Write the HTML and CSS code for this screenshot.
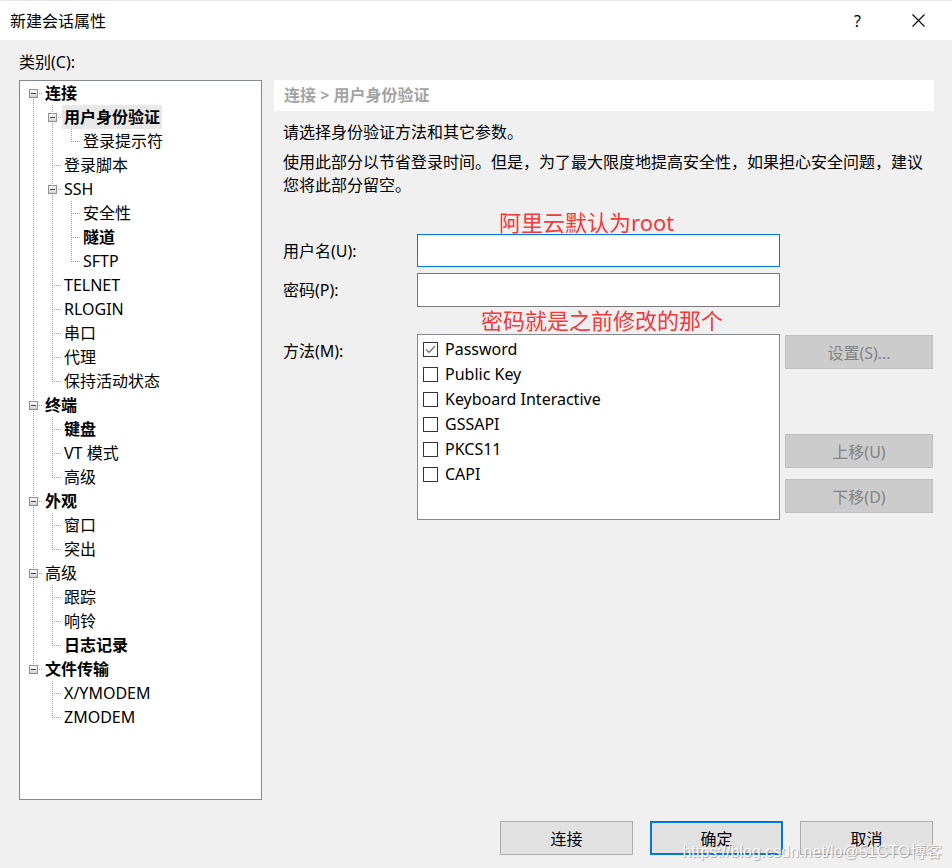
FILE: index.html
```html
<!DOCTYPE html>
<html lang="zh-CN">
<head>
<meta charset="utf-8">
<title>新建会话属性</title>
<link rel="stylesheet" href="styles.css">
</head>
<body>
<div class="window">
  <div class="titlebar">
    <span class="title">新建会话属性</span>
    <div class="tb-controls">
      <span class="help">?</span>
      <svg class="close" width="13" height="13" viewBox="0 0 13 13"><path d="M0.5 0.5L12.5 12.5M12.5 0.5L0.5 12.5" stroke="#000" stroke-width="1.1" fill="none"/></svg>
    </div>
  </div>

  <div class="cat-label">类别(C):</div>

  <div class="main">
    <div class="tree">
      <div class="row"><span class="c f"><i class="box"></i></span><span class="txt b">连接</span></div>
      <div class="row"><span class="c v"></span><span class="c t"><i class="box"></i></span><span class="txt b sel">用户身份验证</span></div>
      <div class="row"><span class="c v"></span><span class="c v"></span><span class="c l"></span><span class="txt">登录提示符</span></div>
      <div class="row"><span class="c v"></span><span class="c t"></span><span class="txt">登录脚本</span></div>
      <div class="row"><span class="c v"></span><span class="c t"><i class="box"></i></span><span class="txt">SSH</span></div>
      <div class="row"><span class="c v"></span><span class="c v"></span><span class="c t"></span><span class="txt">安全性</span></div>
      <div class="row"><span class="c v"></span><span class="c v"></span><span class="c t"></span><span class="txt b">隧道</span></div>
      <div class="row"><span class="c v"></span><span class="c v"></span><span class="c l"></span><span class="txt">SFTP</span></div>
      <div class="row"><span class="c v"></span><span class="c t"></span><span class="txt">TELNET</span></div>
      <div class="row"><span class="c v"></span><span class="c t"></span><span class="txt">RLOGIN</span></div>
      <div class="row"><span class="c v"></span><span class="c t"></span><span class="txt">串口</span></div>
      <div class="row"><span class="c v"></span><span class="c t"></span><span class="txt">代理</span></div>
      <div class="row"><span class="c v"></span><span class="c l"></span><span class="txt">保持活动状态</span></div>
      <div class="row"><span class="c t"><i class="box"></i></span><span class="txt b">终端</span></div>
      <div class="row"><span class="c v"></span><span class="c t"></span><span class="txt b">键盘</span></div>
      <div class="row"><span class="c v"></span><span class="c t"></span><span class="txt">VT 模式</span></div>
      <div class="row"><span class="c v"></span><span class="c l"></span><span class="txt">高级</span></div>
      <div class="row"><span class="c t"><i class="box"></i></span><span class="txt b">外观</span></div>
      <div class="row"><span class="c v"></span><span class="c t"></span><span class="txt">窗口</span></div>
      <div class="row"><span class="c v"></span><span class="c l"></span><span class="txt">突出</span></div>
      <div class="row"><span class="c t"><i class="box"></i></span><span class="txt">高级</span></div>
      <div class="row"><span class="c v"></span><span class="c t"></span><span class="txt">跟踪</span></div>
      <div class="row"><span class="c v"></span><span class="c t"></span><span class="txt">响铃</span></div>
      <div class="row"><span class="c v"></span><span class="c l"></span><span class="txt b">日志记录</span></div>
      <div class="row"><span class="c l"><i class="box"></i></span><span class="txt b">文件传输</span></div>
      <div class="row"><span class="c"></span><span class="c t"></span><span class="txt">X/YMODEM</span></div>
      <div class="row"><span class="c"></span><span class="c l"></span><span class="txt">ZMODEM</span></div>
    </div>

    <div class="panel">
      <div class="crumb">连接 &gt; 用户身份验证</div>
      <p class="p1">请选择身份验证方法和其它参数。</p>
      <p class="p2">使用此部分以节省登录时间。但是，为了最大限度地提高安全性，如果担心安全问题，建议<br>您将此部分留空。</p>

      <div class="note note1">阿里云默认为root</div>
      <div class="field f-user">
        <label class="lbl">用户名(U):</label>
        <div class="input focus"></div>
      </div>
      <div class="field f-pass">
        <label class="lbl">密码(P):</label>
        <div class="input"></div>
      </div>
      <div class="note note2">密码就是之前修改的那个</div>

      <div class="method">
        <label class="lbl mlbl">方法(M):</label>
        <div class="list">
          <div class="item"><span class="cb"><svg width="13" height="13" viewBox="0 0 13 13"><path d="M2 6.5L5 9.5L11 3" stroke="#6b6b6b" stroke-width="1.2" fill="none"/></svg></span>Password</div>
          <div class="item"><span class="cb"></span>Public Key</div>
          <div class="item"><span class="cb"></span>Keyboard Interactive</div>
          <div class="item"><span class="cb"></span>GSSAPI</div>
          <div class="item"><span class="cb"></span>PKCS11</div>
          <div class="item"><span class="cb"></span>CAPI</div>
        </div>
        <div class="side-btns">
          <div class="dbtn">设置(S)...</div>
          <div class="dbtn up">上移(U)</div>
          <div class="dbtn">下移(D)</div>
        </div>
      </div>
    </div>
  </div>

  <div class="footer">
    <div class="btn">连接</div>
    <div class="btn default">确定</div>
    <div class="btn">取消</div>
    <span class="watermark">https://blog.csdn.net/lo@51CTO博客</span>
  </div>
</div>
</body>
</html>
```

FILE: styles.css
```css
* { box-sizing: border-box; }
html, body { margin: 0; padding: 0; }
body {
  background: #f0f0f0;
  font-family: "Noto Sans", "Noto Sans CJK SC", sans-serif;
  font-size: 16px;
  color: #000;
}
.window {
  width: 952px;
  height: 868px;
  background: #f0f0f0;
  position: relative;
  overflow: hidden;
}
.titlebar {
  height: 40px;
  background: #fff;
  border-top: 1px solid #e6e6e6;
  display: flex;
  align-items: center;
  justify-content: space-between;
  padding-left: 10px;
}
.title { font-size: 16px; line-height: 20px; }
.tb-controls { display: flex; align-items: center; }
.help { font-size: 16px; line-height: 20px; margin-right: 51px; }
.close { margin-right: 27px; display: block; }

.cat-label {
  padding: 12px 0 0 19px;
  height: 40px;
  line-height: 20px;
  font-size: 16px;
}

.main {
  display: flex;
  padding-left: 19px;
  gap: 12px;
}

/* tree */
.tree {
  width: 243px;
  height: 720px;
  background: #fff;
  border: 1px solid #828790;
  padding-left: 4px;
  flex: none;
}
.row {
  display: flex;
  align-items: center;
  height: 24px;
}
.c {
  width: 19px;
  height: 24px;
  flex: none;
  display: flex;
  align-items: center;
  justify-content: center;
  padding-right: 1px;
  background-repeat: no-repeat;
}
.c.v {
  background-image: repeating-linear-gradient(to bottom, #a0a0a0 0 1px, transparent 1px 2px);
  background-size: 1px 24px;
  background-position: 9px 0;
}
.c.t {
  background-image: repeating-linear-gradient(to bottom, #a0a0a0 0 1px, transparent 1px 2px),
                    repeating-linear-gradient(to right, #a0a0a0 0 1px, transparent 1px 2px);
  background-size: 1px 24px, 10px 1px;
  background-position: 9px 0, 9px 12px;
}
.c.l {
  background-image: repeating-linear-gradient(to bottom, #a0a0a0 0 1px, transparent 1px 2px),
                    repeating-linear-gradient(to right, #a0a0a0 0 1px, transparent 1px 2px);
  background-size: 1px 12px, 10px 1px;
  background-position: 9px 0, 9px 12px;
}
.c.f {
  background-image: repeating-linear-gradient(to bottom, #a0a0a0 0 1px, transparent 1px 2px),
                    repeating-linear-gradient(to right, #a0a0a0 0 1px, transparent 1px 2px);
  background-size: 1px 12px, 10px 1px;
  background-position: 9px 12px, 9px 12px;
}
.box {
  width: 9px;
  height: 9px;
  border: 1px solid #8e8f8f;
  background: linear-gradient(#ffffff, #d2d2d2);
  display: flex;
  align-items: center;
  justify-content: center;
}
.box::after {
  content: "";
  width: 5px;
  height: 1px;
  background: #2c3f7a;
}
.txt {
  padding: 0 2px;
  line-height: 24px;
  font-size: 16px;
  white-space: nowrap;
}
.txt.b { font-weight: 700; }
.txt.sel { background: #e8e8e8; }

/* panel */
.panel {
  width: 660px;
  flex: none;
}
.crumb {
  height: 31px;
  background: #fff;
  color: #a3a3a3;
  font-weight: 700;
  padding-left: 10px;
  line-height: 31px;
}
.p1 {
  margin: 11px 0 0 9px;
  line-height: 20px;
}
.p2 {
  margin: 9px 0 0 9px;
  line-height: 23px;
}
.note {
  color: #f2393c;
  font-size: 22px;
  line-height: 16px;
  height: 20px;
  white-space: nowrap;
  position: relative;
  z-index: 1;
}
.note1 { margin-top: 17px; padding-left: 225px; }
.note2 { margin-top: 5px; padding-left: 207px; }
.field {
  display: flex;
  align-items: center;
}
.lbl {
  width: 143px;
  padding-left: 9px;
  line-height: 20px;
  flex: none;
}
.input {
  width: 363px;
  background: #fff;
  border: 1px solid #7a7a7a;
}
.f-user .input { height: 33px; }
.f-pass { margin-top: 6px; }
.f-pass .input { height: 34px; }
.input.focus { border-color: #0078d7; }

.method {
  display: flex;
  align-items: flex-start;
  margin-top: 2px;
}
.mlbl { padding-top: 7px; }
.list {
  width: 363px;
  height: 186px;
  background: #fff;
  border: 1px solid #828790;
  padding: 2px 0 0 5px;
}
.item {
  display: flex;
  align-items: center;
  height: 25px;
  line-height: 25px;
  white-space: nowrap;
}
.cb {
  width: 15px;
  height: 15px;
  border: 1px solid #333;
  background: #fff;
  margin-right: 7px;
  display: flex;
  align-items: center;
  justify-content: center;
  flex: none;
}
.cb svg { display: block; }
.side-btns {
  margin-left: 5px;
  margin-top: 1px;
  display: flex;
  flex-direction: column;
}
.dbtn {
  width: 148px;
  height: 34px;
  background: #cccccc;
  border: 1px solid #bfbfbf;
  color: #838383;
  display: flex;
  align-items: center;
  justify-content: center;
}
.dbtn.up { margin-top: 65px; margin-bottom: 11px; }

.footer {
  display: flex;
  justify-content: flex-end;
  gap: 17px;
  padding-right: 19px;
  margin-top: 21px;
  position: relative;
}
.btn {
  width: 133px;
  height: 34px;
  background: #e1e1e1;
  border: 1px solid #adadad;
  display: flex;
  align-items: center;
  justify-content: center;
}
.btn.default { border: 2px solid #0078d7; }
.watermark {
  position: absolute;
  right: 10px;
  top: 17px;
  font-family: "Liberation Sans", sans-serif;
  font-size: 16px;
  color: rgba(255, 255, 255, 0.92);
  text-shadow: 1px 1px 1px rgba(110, 110, 110, 0.55);
  white-space: nowrap;
}
```
